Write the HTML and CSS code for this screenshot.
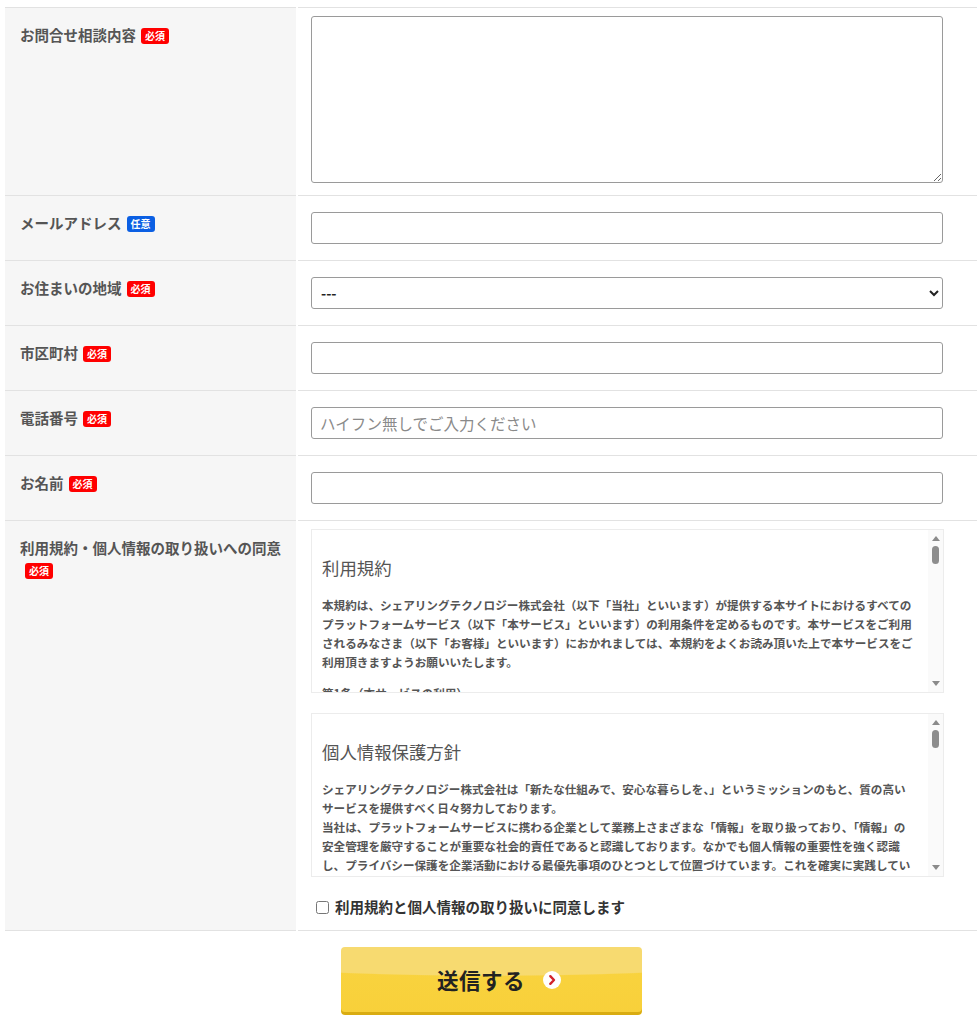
FILE: index.html
```html
<!DOCTYPE html>
<html lang="ja">
<head>
<meta charset="utf-8">
<title>お問合せフォーム</title>
<link rel="stylesheet" href="styles.css">
</head>
<body>
<form class="form">
  <div class="row">
    <div class="label">お問合せ相談内容<span class="badge">必須</span></div>
    <div class="field field-top"><textarea class="textarea"></textarea></div>
  </div>
  <div class="row">
    <div class="label">メールアドレス<span class="badge badge-opt">任意</span></div>
    <div class="field"><input class="input" type="text"></div>
  </div>
  <div class="row">
    <div class="label">お住まいの地域<span class="badge">必須</span></div>
    <div class="field"><select class="input select"><option>---</option></select></div>
  </div>
  <div class="row">
    <div class="label">市区町村<span class="badge">必須</span></div>
    <div class="field"><input class="input" type="text"></div>
  </div>
  <div class="row">
    <div class="label">電話番号<span class="badge">必須</span></div>
    <div class="field"><input class="input" type="text" placeholder="ハイフン無しでご入力ください"></div>
  </div>
  <div class="row">
    <div class="label">お名前<span class="badge">必須</span></div>
    <div class="field"><input class="input" type="text"></div>
  </div>
  <div class="row row-last">
    <div class="label">利用規約・個人情報の取り扱いへの同意<span class="badge">必須</span></div>
    <div class="field field-top field-consent">
      <div class="scrollbox">
        <div class="scroll-content">
          <h3 class="doc-title">利用規約</h3>
          <p class="doc-text">本規約は、シェアリングテクノロジー株式会社（以下「当社」といいます）が提供する本サイトにおけるすべてのプラットフォームサービス（以下「本サービス」といいます）の利用条件を定めるものです。本サービスをご利用されるみなさま（以下「お客様」といいます）におかれましては、本規約をよくお読み頂いた上で本サービスをご利用頂きますようお願いいたします。</p>
          <p class="doc-text">第1条（本サービスの利用）<br>お客様は、本規約に同意の上、当社の定める方法により本サービスを利用するものとします。お客様が本サービスを利用した場合、本規約に同意したものとみなします。</p>
          <p class="doc-text">第2条（本規約の変更）<br>当社は、お客様の承諾を得ることなく、いつでも本規約の内容を変更することができるものとします。</p>
        </div>
        <div class="rail" aria-hidden="true">
          <span class="rail-arrow rail-up"></span>
          <span class="rail-track"><span class="rail-thumb"></span></span>
          <span class="rail-arrow rail-down"></span>
        </div>
      </div>
      <div class="scrollbox">
        <div class="scroll-content">
          <h3 class="doc-title">個人情報保護方針</h3>
          <p class="doc-text">シェアリングテクノロジー株式会社は「新たな仕組みで、安心な暮らしを、」というミッションのもと、質の高いサービスを提供すべく日々努力しております。<br>当社は、プラットフォームサービスに携わる企業として業務上さまざまな「情報」を取り扱っており、「情報」の安全管理を厳守することが重要な社会的責任であると認識しております。なかでも個人情報の重要性を強く認識し、プライバシー保護を企業活動における最優先事項のひとつとして位置づけています。これを確実に実践していくため、以下の個人情報保護方針を定め、全社員に周知徹底し、個人情報の適切な保護に努めます。</p>
        </div>
        <div class="rail" aria-hidden="true">
          <span class="rail-arrow rail-up"></span>
          <span class="rail-track"><span class="rail-thumb"></span></span>
          <span class="rail-arrow rail-down"></span>
        </div>
      </div>
      <label class="agree"><input class="check" type="checkbox">利用規約と個人情報の取り扱いに同意します</label>
    </div>
  </div>
  <div class="actions">
    <button class="submit" type="button"><span class="submit-text">送信する</span><span class="submit-icon"><svg width="18" height="18" viewBox="0 0 18 18"><circle cx="9" cy="9" r="9" fill="#fff"/><path d="M7.3 5.2 11 9l-3.7 3.8" fill="none" stroke="#d2232a" stroke-width="2.4" stroke-linecap="round" stroke-linejoin="round"/></svg></span></button>
  </div>
</form>
</body>
</html>
```
FILE: styles.css
```css
* { box-sizing: border-box; }

body {
  margin: 0;
  background: #fff;
  color: #333;
  font-family: "Noto Sans CJK JP", "Noto Sans", sans-serif;
}

.form {
  padding: 7px 0 0 5px;
}

.row {
  display: grid;
  grid-template-columns: 291px 1fr;
  column-gap: 2px;
}

.row > * {
  border-top: 1px solid #e2e2e2;
}

.row-last > * {
  border-bottom: 1px solid #e2e2e2;
}

.label {
  background: #f6f6f6;
  padding: 16px 8px 0 15px;
  font-size: 14.5px;
  line-height: 22px;
  font-weight: 700;
  color: #555;
}

.badge {
  display: inline-block;
  margin-left: 5px;
  padding: 0 4px;
  border-radius: 3px;
  background: #f00;
  color: #fff;
  font-size: 10px;
  line-height: 16px;
  font-weight: 700;
  vertical-align: 1px;
}

.badge-opt {
  background: #0b5fe3;
}

.field {
  padding: 16px 34px 16px 13px;
}

.field-top {
  padding-top: 8px;
  padding-bottom: 12px;
}

.field-consent {
  padding-right: 33px;
  padding-bottom: 13px;
}

.textarea {
  display: block;
  width: 100%;
  height: 167px;
  border: 1px solid #9a9a9a;
  border-radius: 3px;
  resize: vertical;
  font-family: inherit;
}

.input {
  display: block;
  width: 100%;
  height: 32px;
  border: 1px solid #9a9a9a;
  border-radius: 3px;
  background: #fff;
  padding: 0 8px;
  font-family: inherit;
  font-size: 15.5px;
  color: #333;
}

.input::placeholder {
  color: #8a8a8a;
}

.select {
  padding-left: 5px;
  font-size: 14px;
  font-weight: 700;
  color: #222;
}

.scrollbox {
  display: flex;
  height: 164px;
  border: 1px solid #ececec;
  margin-bottom: 20px;
  color: #555;
}

.scroll-content {
  flex: 1;
  min-width: 0;
  overflow: hidden;
  padding: 0 12px 0 10px;
}

.rail {
  display: flex;
  flex-direction: column;
  align-items: center;
  width: 15px;
  background: #fafafa;
}

.rail-arrow {
  width: 0;
  height: 0;
  border-left: 4px solid transparent;
  border-right: 4px solid transparent;
}

.rail-up {
  margin-top: 6px;
  border-bottom: 5px solid #8a8a8a;
}

.rail-down {
  margin: 0 0 6px;
  border-top: 5px solid #8a8a8a;
}

.rail-track {
  flex: 1;
  display: flex;
  flex-direction: column;
  align-items: center;
  padding-top: 5px;
}

.rail-thumb {
  width: 7px;
  height: 18px;
  border-radius: 4px;
  background: #8d8d8d;
}

.doc-title {
  margin: 26px 0 0;
  font-size: 17.4px;
  line-height: 24px;
  font-weight: 400;
  color: #555;
}

.doc-text {
  margin: 16px 0 12px;
  font-size: 11.6px;
  line-height: 19px;
  font-weight: 700;
  color: #555;
}

.doc-text + .doc-text {
  margin-top: 0;
}

.agree {
  display: flex;
  align-items: center;
  margin-top: 19px;
  line-height: 20px;
  font-size: 14.5px;
  font-weight: 700;
  color: #333;
}

.check {
  width: 13px;
  height: 13px;
  margin: 0 6px 0 5px;
}

.actions {
  display: flex;
  justify-content: center;
  padding: 16px 0 9px;
}

.submit {
  display: flex;
  align-items: center;
  justify-content: center;
  width: 301px;
  height: 68px;
  padding: 0 0 3px 16px;
  border: none;
  border-radius: 4px;
  background:
    radial-gradient(ellipse 130% 55% at 50% -12%, #f7da70 97%, rgba(247, 218, 112, 0) 100%),
    linear-gradient(#f9d440, #f8d03a);
  box-shadow: inset 0 -3px 0 #d9ac12;
  font-family: inherit;
  cursor: pointer;
}

.submit-text {
  font-size: 21.5px;
  font-weight: 700;
  color: #222;
  letter-spacing: 0.5px;
}

.submit-icon {
  display: flex;
  margin-left: 18px;
}
```
